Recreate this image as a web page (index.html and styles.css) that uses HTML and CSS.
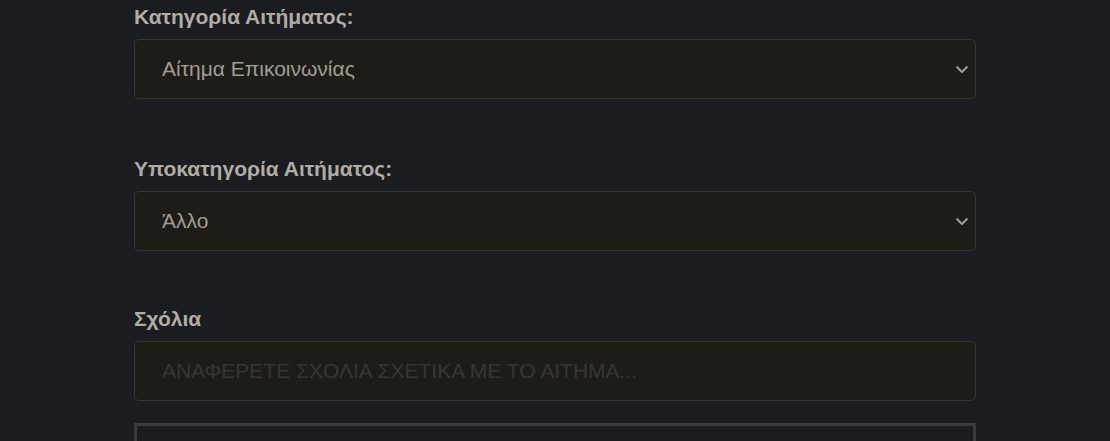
FILE: index.html
```html
<!DOCTYPE html>
<html lang="el">
<head>
<meta charset="utf-8">
<link rel="stylesheet" href="styles.css">
</head>
<body>
<div class="form">
  <div class="group">
    <label class="label">Κατηγορία Αιτήματος:</label>
    <div class="field select">
      <span class="value">Αίτημα Επικοινωνίας</span>
      <svg class="chev" width="14" height="9" viewBox="0 0 14 9"><path d="M1.5 1.5 L7 7 L12.5 1.5" fill="none" stroke="#a19c95" stroke-width="2"/></svg>
    </div>
  </div>
  <div class="group">
    <label class="label">Υποκατηγορία Αιτήματος:</label>
    <div class="field select">
      <span class="value">Άλλο</span>
      <svg class="chev" width="14" height="9" viewBox="0 0 14 9"><path d="M1.5 1.5 L7 7 L12.5 1.5" fill="none" stroke="#a19c95" stroke-width="2"/></svg>
    </div>
  </div>
  <div class="group">
    <label class="label">Σχόλια</label>
    <div class="field">
      <span class="placeholder">ΑΝΑΦΕΡΕΤΕ ΣΧΟΛΙΑ ΣΧΕΤΙΚΑ ΜΕ ΤΟ ΑΙΤΗΜΑ...</span>
    </div>
  </div>
  <div class="box"></div>
</div>
</body>
</html>
```
FILE: styles.css
```css
html, body {
  margin: 0;
  padding: 0;
  background: #1b1c1f;
  font-family: "Liberation Sans", Arial, sans-serif;
  overflow: hidden;
}
.form {
  width: 842px;
  margin-left: 134px;
  padding-top: 5px;
  display: flex;
  flex-direction: column;
}
.group {
  display: flex;
  flex-direction: column;
  margin-bottom: 58px;
}
.group:nth-child(2) { margin-bottom: 56px; }
.group:nth-child(3) { margin-bottom: 22px; }
.label {
  font-size: 21px;
  font-weight: bold;
  line-height: 24px;
  color: #b1aca5;
  margin-bottom: 10px;
}
.group:nth-child(3) .label { line-height: 23px; margin-bottom: 11px; }
.field {
  box-sizing: border-box;
  height: 60px;
  border: 1px solid #35363a;
  border-radius: 5px;
  background: #1e1c17;
  display: flex;
  align-items: center;
  padding: 0 6px 0 27px;
}
.select { justify-content: space-between; }
.value {
  font-size: 21px;
  color: #a19c95;
}
.placeholder {
  font-size: 21px;
  color: #373632;
}
.chev { display: block; }
.box {
  box-sizing: border-box;
  height: 60px;
  border: 3px solid #3a3a3a;
  background: #1b1c1f;
}
```
